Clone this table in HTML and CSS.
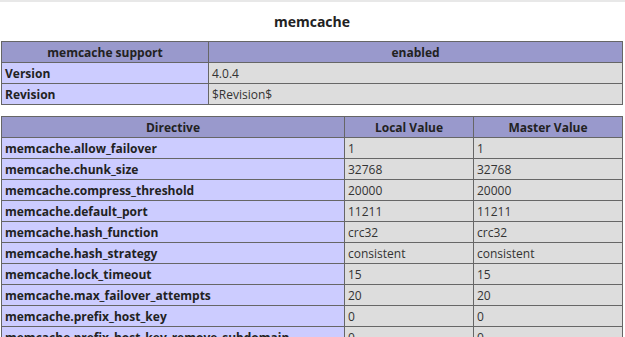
FILE: index.html
```html
<!DOCTYPE html>
<html>
<head>
<meta charset="utf-8">
<title>memcache</title>
<link rel="stylesheet" href="styles.css">
</head>
<body>
<div class="topbar"></div>
<div class="page">
<h2 class="title">memcache</h2>
<table class="info">
<colgroup><col class="c1"><col></colgroup>
<tr class="h"><th>memcache support</th><th>enabled</th></tr>
<tr><td class="e">Version </td><td class="v">4.0.4 </td></tr>
<tr><td class="e">Revision </td><td class="v">$Revision$ </td></tr>
</table>
<table class="info">
<colgroup><col class="d1"><col class="d2"><col></colgroup>
<tr class="h"><th>Directive</th><th>Local Value</th><th>Master Value</th></tr>
<tr><td class="e">memcache.allow_failover</td><td class="v">1</td><td class="v">1</td></tr>
<tr><td class="e">memcache.chunk_size</td><td class="v">32768</td><td class="v">32768</td></tr>
<tr><td class="e">memcache.compress_threshold</td><td class="v">20000</td><td class="v">20000</td></tr>
<tr><td class="e">memcache.default_port</td><td class="v">11211</td><td class="v">11211</td></tr>
<tr><td class="e">memcache.hash_function</td><td class="v">crc32</td><td class="v">crc32</td></tr>
<tr><td class="e">memcache.hash_strategy</td><td class="v">consistent</td><td class="v">consistent</td></tr>
<tr><td class="e">memcache.lock_timeout</td><td class="v">15</td><td class="v">15</td></tr>
<tr><td class="e">memcache.max_failover_attempts</td><td class="v">20</td><td class="v">20</td></tr>
<tr><td class="e">memcache.prefix_host_key</td><td class="v">0</td><td class="v">0</td></tr>
<tr><td class="e">memcache.prefix_host_key_remove_subdomain</td><td class="v">0</td><td class="v">0</td></tr>
</table>
</div>
</body>
</html>
```
FILE: styles.css
```css
html, body {
  margin: 0;
  padding: 0;
  background: #fff;
}
body {
  font-family: "Open Sans", "Noto Sans", sans-serif;
  color: #222;
  font-size: 12px;
}
.topbar {
  height: 2px;
  background: #e8e8e8;
}
.page {
  padding: 0 0 0 1px;
  width: 622px;
}
.title {
  margin: 0;
  padding-top: 11px;
  height: 39px;
  box-sizing: border-box;
  text-align: center;
  font-size: 14px;
  font-weight: bold;
  line-height: 18px;
}
table.info {
  border-collapse: collapse;
  width: 622px;
  margin-bottom: 11px;
  table-layout: fixed;
}
col.c1 { width: 207px; }
col.d1 { width: 343px; }
col.d2 { width: 129px; }
tr { height: 21px; }
th, td {
  border: 1px solid #666;
  padding: 1px 3px 0;
  font-size: 12px;
  line-height: 18px;
  vertical-align: middle;
  white-space: nowrap;
  overflow: hidden;
}
tr.h th {
  background: #9999cc;
  font-weight: bold;
  text-align: center;
  color: #222;
}
td.e {
  background: #ccccff;
  font-weight: bold;
  color: #222;
}
td.v {
  background: #dddddd;
  color: #333;
}
```
